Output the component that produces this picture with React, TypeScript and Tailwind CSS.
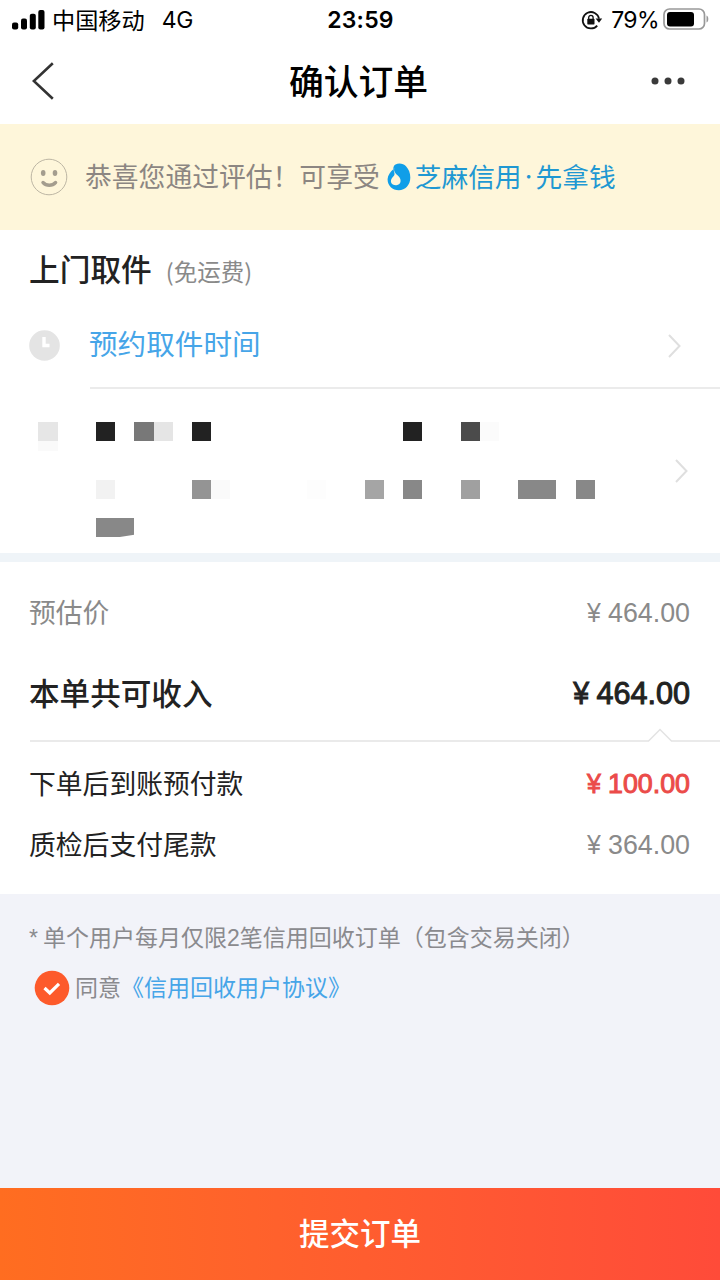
import type { ReactNode } from "react";
import clsx from "clsx";

// Masked address cells, laid on a 19.2px grid: [row, column, colour]
const maskCells: [number, number, string][] = [
  [1, 3, "#e6e6e6"],
  [1, 6, "#222222"],
  [1, 8, "#787878"],
  [1, 9, "#e5e5e5"],
  [1, 11, "#222222"],
  [1, 22, "#222222"],
  [1, 25, "#4b4b4b"],
  [1, 26, "#fbfbfb"],
  [4, 6, "#f2f2f2"],
  [4, 11, "#949494"],
  [4, 12, "#fafafa"],
  [4, 17, "#fdfdfd"],
  [4, 20, "#a5a5a5"],
  [4, 22, "#888888"],
  [4, 25, "#a0a0a0"],
  [4, 28, "#888888"],
  [4, 29, "#888888"],
  [4, 31, "#888888"],
];

function StatusBar() {
  return (
    <div className="flex h-10 items-center justify-between pr-[11px] pl-3">
      <div className="flex w-[240px] items-center">
        <svg width="33" height="20" viewBox="0 0 33 20" fill="#000">
          <rect x="0" y="12.5" width="6.2" height="7" rx="2" />
          <rect x="9" y="8.5" width="6" height="11" rx="2" />
          <rect x="17.8" y="3.8" width="6" height="15.7" rx="2" />
          <rect x="26.3" y="0" width="6.2" height="19.5" rx="2" />
        </svg>
        <span className="ml-[7px] pb-0.5 text-[23.2px] leading-[38px]">中国移动</span>
        <span className="ml-[17px] font-[Inter,sans-serif] text-[23px] leading-10 tracking-[-0.3px]">4G</span>
      </div>
      <span className="font-[Inter,sans-serif] text-[23px] leading-10 font-semibold tracking-[0.2px]">23:59</span>
      <div className="flex w-[240px] items-center justify-end">
        <svg width="22" height="20" viewBox="0 0 22 20" fill="none" stroke="#111" strokeWidth="1.8">
          <path d="M16.2 15.6A8.2 8.2 0 1 1 18 8.6" />
          <path d="M14.6 8.6h6.6L18 12.8z" fill="#111" stroke="none" />
          <rect x="6.3" y="8.8" width="7.2" height="5.6" rx="0.6" fill="#111" stroke="none" />
          <path d="M7.7 9.2V7.6a2.2 2.2 0 0 1 4.4 0v1.6" strokeWidth="1.3" />
        </svg>
        <span className="ml-2 font-[Inter,sans-serif] text-[23px] leading-10 tracking-[-0.6px]">79%</span>
        <svg width="46" height="22" viewBox="0 0 46 22" className="mb-0.5 ml-1">
          <rect x="1" y="1" width="40.5" height="20" rx="5.5" fill="none" stroke="#999" strokeWidth="1.7" />
          <rect x="4" y="4" width="27" height="14.5" rx="3" fill="#000" />
          <path d="M43.5 7.5c2.4.8 2.4 6.2 0 7z" fill="#999" />
        </svg>
      </div>
    </div>
  );
}

function Chevron() {
  return (
    <svg width="13" height="24" viewBox="0 0 13 24" fill="none" stroke="#dfdfdf" strokeWidth="2">
      <path d="M1 1l10.5 11L1 23" />
    </svg>
  );
}

function PriceRow({ label, children, className }: { label: string; children: ReactNode; className?: string }) {
  return (
    <div className={clsx("flex items-center justify-between pr-[30px] pl-[29px]", className)}>
      <span className="pb-0.5">{label}</span>
      {children}
    </div>
  );
}

function Price({ value, className }: { value: string; className?: string }) {
  return (
    <span className={clsx("flex gap-[7px] font-['Liberation_Sans',Arial,sans-serif]", className)}>
      <span className="origin-right scale-x-[.93]">¥</span>
      {value}
    </span>
  );
}

export default function App() {
  return (
    <main className="flex h-[1280px] w-[720px] flex-col overflow-hidden bg-[#f2f3f9] font-['Noto_Sans_CJK_SC',sans-serif] text-[#222]">
      <header className="h-[124px] bg-white text-black">
        <StatusBar />
        <nav className="flex h-[82px] items-center justify-between pr-[35px] pl-8">
          <svg width="34" height="38" viewBox="0 0 34 38" fill="none" stroke="#333" strokeWidth="2.6">
            <path d="M20.8 1.2L1.8 19l19 17.8" />
          </svg>
          <h1 className="pb-0.5 text-[34.8px] leading-none font-medium">确认订单</h1>
          <svg width="34" height="8" viewBox="0 0 34 8" fill="#3a3a3a">
            <circle cx="4" cy="4" r="3.5" />
            <circle cx="17" cy="4" r="3.5" />
            <circle cx="30" cy="4" r="3.5" />
          </svg>
        </nav>
      </header>

      <section className="flex h-[106px] items-center bg-[#fef6da] pl-[30px] text-[26.8px] leading-none text-[#8c8682]">
        <svg width="38" height="38" viewBox="0 0 38 38" fill="none">
          <circle cx="19" cy="19" r="17.8" stroke="#bdb6a4" strokeWidth="1" />
          <ellipse cx="13.2" cy="15" rx="2.3" ry="3" fill="#a49d8e" />
          <ellipse cx="25" cy="15" rx="2.3" ry="3" fill="#a49d8e" />
          <path d="M13 24.5c3.4 3.6 9.2 3.6 12.6 0" stroke="#a49d8e" strokeWidth="3.4" strokeLinecap="round" />
        </svg>
        <span className="ml-[17px] pb-0.5">恭喜您通过评估！可享受</span>
        <svg width="24" height="28" viewBox="0 0 24 28" className="ml-[7px]">
          <path
            d="M8.5 1.5C12-0.3 16.5 0.6 19 3.3C21.8 6.3 23.3 10.2 23.3 14.5C23.3 22 18.2 27.3 11.8 27.3C5.2 27.3 0.3 22.3 0.6 16C0.8 12 3.4 8.9 6.3 6.2C6.3 4 6.8 2.5 8.5 1.5z"
            fill="#109ee8"
          />
          <path
            d="M7.3 4.5C6.3 8.5 8.5 10.6 11.3 13C14.8 16 14.5 21.8 9.3 22.2C4 22.4 2.6 17.8 5.2 14.7C6.8 12.8 8 11.9 7.4 9.9C6.8 8.2 6.3 6.5 7.3 4.5z"
            fill="#fef6da"
          />
        </svg>
        <span className="ml-[4px] flex pb-0.5 text-[26.7px] text-[#1f98d2]">
          芝麻信用<span className="w-[14px] text-center font-[Inter,sans-serif]">·</span>先拿钱
        </span>
      </section>

      <section className="h-[323px] bg-white">
        <div className="flex h-[76px] items-center pl-[29px] leading-none">
          <h2 className="text-[30.7px] font-medium">上门取件</h2>
          <span className="ml-[14px] pt-2 text-[23.5px] text-[#8a8a8a]">(免运费)</span>
        </div>
        <div className="flex h-[81px] items-center pr-[39px] pb-[3px] pl-[29px]">
          <svg width="31" height="31" viewBox="0 0 31 31">
            <circle cx="15.5" cy="15.5" r="15.3" fill="#e4e4e4" />
            <path d="M15 7v8.5h5.5" fill="none" stroke="#fff" strokeWidth="3.4" />
          </svg>
          <span className="ml-[29px] pb-[3px] text-[28.6px] leading-none text-[#46a5e8]">预约取件时间</span>
          <span className="ml-auto pt-px">
            <Chevron />
          </span>
        </div>
        <div className="ml-[90px] h-[2px] bg-[#ebebeb]" />
        <div className="flex h-[164px] items-center justify-between pr-8">
          <div className="grid grid-cols-[repeat(32,19.2px)] grid-rows-[repeat(6,19.2px)] pt-[17px]">
            {maskCells.map(([row, col, color]) => (
              <i key={`${row}-${col}`} style={{ gridRow: row, gridColumn: col, background: color }} />
            ))}
            <i className="col-start-3 row-start-2 h-[10px] bg-[#fafafa]" />
            <i className="col-span-2 col-start-6 row-start-6 bg-[#888] [clip-path:polygon(0_0,100%_0,100%_88%,62%_100%,0_100%)]" />
          </div>
          <Chevron />
        </div>
      </section>

      <div className="h-[9px] shrink-0 bg-[#eff4f8]" />

      <section className="h-[332px] bg-white text-[26.8px] leading-none">
        <PriceRow label="预估价" className="h-[103px] text-[#8a8a8a]">
          <Price value="464.00" />
        </PriceRow>
        <PriceRow label="本单共可收入" className="h-[56px] text-[30.6px] font-medium">
          <Price value="464.00" className="font-normal [-webkit-text-stroke:1px_#222]" />
        </PriceRow>
        <svg width="690" height="14" viewBox="0 0 690 14" fill="none" stroke="#e3e3e3" strokeWidth="1.5" className="mt-[7px] ml-[30px]">
          <path d="M0 13h618.5L630 1.5L641.5 13H690" />
        </svg>
        <PriceRow label="下单后到账预付款" className="mt-[11px] h-[62px]">
          <Price value="100.00" className="text-[#eb4b49] [-webkit-text-stroke:1px_#eb4b49]" />
        </PriceRow>
        <PriceRow label="质检后支付尾款" className="h-[60px]">
          <Price value="364.00" className="text-[#8a8a8a]" />
        </PriceRow>
      </section>

      <section className="flex flex-1 flex-col pt-[17px] pl-[29px] text-[23px] leading-[50px] text-[#8a8a8e]">
        <p>
          <span className="mr-[5px] font-['Liberation_Sans',Arial,sans-serif]">*</span>
          单个用户每月仅限<span className="font-['Liberation_Sans',Arial,sans-serif]">2</span>笔信用回收订单（包含交易关闭）
        </p>
        <label className="flex items-center pl-[5px]">
          <svg width="36" height="36" viewBox="0 0 36 36" fill="none">
            <circle cx="18" cy="18" r="17.3" fill="#fd5a2b" />
            <path d="M10.5 18l5.3 5L25 13.8" stroke="#fff" strokeWidth="3.2" />
          </svg>
          <span className="ml-[5px] pb-[3px] leading-[47px]">同意</span>
          <a className="pb-[3px] leading-[47px] text-[#46a5e8]">《信用回收用户协议》</a>
        </label>
      </section>

      <button className="h-[92px] shrink-0 bg-linear-to-r from-[#ff6d20] to-[#ff4b39] pb-1 text-[30.5px] leading-none font-medium text-white">
        提交订单
      </button>
    </main>
  );
}
